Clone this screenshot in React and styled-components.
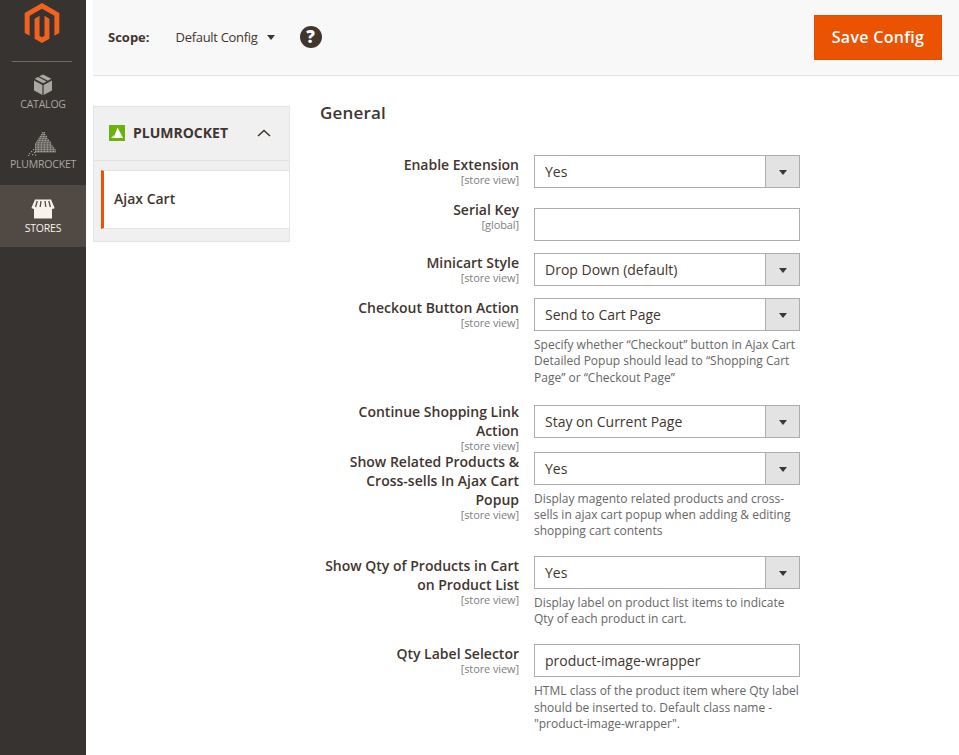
import React from 'react'
import styled, { createGlobalStyle } from 'styled-components'

const Global = createGlobalStyle`
  html, body { margin: 0; padding: 0; background: #fff; }
  body { font-family: "Open Sans", "Liberation Sans", sans-serif; color: #41362f; overflow: hidden; }
  * { box-sizing: border-box; }
`

const Page = styled.div`
  display: flex;
  min-height: 755px;
  width: 959px;
`

const Sidebar = styled.nav`
  width: 86px;
  flex: none;
  background: #373330;
  display: flex;
  flex-direction: column;
  align-items: stretch;
`

const LogoBox = styled.div`
  height: 62px;
  margin: 0 14px 0 12px;
  padding-top: 3px;
  border-bottom: 1px solid #736d68;
  display: flex;
  justify-content: center;
`

const NavItem = styled.a`
  display: flex;
  flex-direction: column;
  align-items: center;
  height: ${p => p.$h}px;
  padding-top: ${p => p.$top}px;
  background: ${p => (p.$active ? '#514943' : 'transparent')};
  color: ${p => (p.$active ? '#f7f3eb' : '#aaa6a0')};
  font-size: 10.5px;
  line-height: 14px;
  letter-spacing: -0.2px;
  white-space: nowrap;
`

const NavIcon = styled.svg`
  display: block;
  margin-bottom: ${p => p.$mb || 0}px;
`

const Main = styled.div`
  flex: 1;
  min-width: 0;
  padding-left: 7px;
`

const TopBar = styled.header`
  height: 76px;
  background: #f8f8f8;
  border-bottom: 1px solid #e3e3e3;
  display: flex;
  align-items: center;
  padding: 0 17px 0 15px;
`

const ScopeGroup = styled.div`
  display: flex;
  align-items: center;
  padding-bottom: 2px;
`

const ScopeLabel = styled.span`
  font-size: 13px;
  font-weight: 700;
  margin-right: 26px;
`

const ScopeValue = styled.span`
  font-size: 13px;
  letter-spacing: -0.3px;
  color: #41362f;
  margin-right: 9px;
`

const Caret = styled.span`
  display: block;
  width: 0;
  height: 0;
  border-left: 4px solid transparent;
  border-right: 4px solid transparent;
  border-top: 5px solid #41362f;
  margin-top: 2px;
`

const Help = styled.span`
  width: 22px;
  height: 22px;
  margin-left: 25px;
  border-radius: 50%;
  background: #41362f;
  color: #fff;
  font-size: 17px;
  font-weight: 800;
  line-height: 22px;
  text-align: center;
`

const SaveButton = styled.button`
  margin-left: auto;
  width: 128px;
  height: 45px;
  background: #eb5202;
  border: 1px solid #e04f02;
  color: #fff;
  font-family: inherit;
  font-size: 16px;
  font-weight: 600;
  letter-spacing: 0.3px;
  padding: 0 0 1px;
`

const Content = styled.div`
  display: flex;
  align-items: flex-start;
`

const Tabs = styled.aside`
  width: 197px;
  flex: none;
  margin-top: 30px;
  background: #f0f0f0;
  border: 1px solid #e3e3e3;
  border-right-color: #e6e6e6;
`

const TabsHead = styled.div`
  height: 54px;
  display: flex;
  align-items: center;
  padding: 0 18px 2px 15px;
  border-bottom: 1px solid #e3e3e3;
`

const TabsTitle = styled.span`
  font-size: 14px;
  font-weight: 700;
  margin-left: 8px;
  margin-right: auto;
`

const TabsItem = styled.div`
  margin: 9px 0 0 7px;
  height: 59px;
  background: #fff;
  border-left: 3px solid #eb5202;
  border-top: 1px solid #e3e3e3;
  border-bottom: 1px solid #e3e3e3;
  display: flex;
  align-items: center;
  padding: 0 0 2px 10px;
  font-size: 14px;
  font-weight: 600;
`

const TabsFoot = styled.div`
  height: 12px;
`

const Form = styled.section`
  width: 510px;
  margin-left: 30px;
  padding-top: 25px;
`

const Heading = styled.h2`
  margin: 0 0 30px;
  font-size: 17px;
  line-height: 24px;
  font-weight: 600;
  letter-spacing: 0.2px;
`

const Row = styled.div`
  display: grid;
  grid-template-columns: 199px 266px;
  column-gap: 15px;
  align-items: start;
  margin-bottom: ${p => p.$gap}px;
`

const LabelCol = styled.div`
  text-align: right;
  margin-top: ${p => (p.$lift ? -p.$lift : 0)}px;
`

const LabelText = styled.div`
  font-size: 14px;
  font-weight: 600;
  line-height: 19px;
  color: #41362f;
`

const Scope = styled.div`
  font-size: 11px;
  line-height: 12px;
  letter-spacing: -0.1px;
  color: #808080;
`

const SelectBox = styled.div`
  height: 33px;
  border: 1px solid #adadad;
  display: flex;
  align-items: center;
  font-size: 14px;
  padding-left: 10px;
  color: #41362f;
  background: #fff;
`

const SelectArrow = styled.span`
  margin-left: auto;
  width: 34px;
  height: 100%;
  background: #e3e3e3;
  border-left: 1px solid #adadad;
  display: flex;
  align-items: center;
  justify-content: center;
`

const TextInput = styled.input`
  display: block;
  width: 100%;
  height: 33px;
  border: 1px solid #adadad;
  padding: 0 10px;
  font-family: inherit;
  font-size: 14px;
  color: #41362f;
  background: #fff;
  outline: none;
`

const Note = styled.div`
  margin: 6px 0 0;
  font-size: 12px;
  line-height: 16.3px;
  color: #666;
  white-space: nowrap;
`

const Select = ({ value }) => (
  <SelectBox>
    {value}
    <SelectArrow><Caret /></SelectArrow>
  </SelectBox>
)

// pyramid of little dots, same as the menu icon
const pyramidDots = () => {
  const dots = []
  for (let r = 0; r < 11; r++) {
    const y = r * 1.9
    const right = 0.8 + r * 1.2
    const left = r > 6 ? 0.8 + 6 * 1.2 : right
    for (let x = 15 - left; x <= 15 + right; x += 1.5) {
      dots.push(<rect key={`${r}-${x}`} x={x} y={y} width="1.2" height="1.4" fill="#aaa6a0" />)
    }
  }
  const stray = [[5, 17], [3, 19], [6, 20], [1, 21], [4, 22], [7, 22.5], [0, 23]]
  stray.forEach(([x, y]) => dots.push(<rect key={`s${x}`} x={x} y={y} width="1.2" height="1.2" fill="#aaa6a0" />))
  return dots
}

const fields = [
  { label: ['Enable Extension'], scope: '[store view]', value: 'Yes', gap: 20 },
  { label: ['Serial Key'], scope: '[global]', input: '', lift: 8, gap: 12 },
  { label: ['Minicart Style'], scope: '[store view]', value: 'Drop Down (default)', gap: 12 },
  {
    label: ['Checkout Button Action'],
    scope: '[store view]',
    value: 'Send to Cart Page',
    note: ['Specify whether “Checkout” button in Ajax Cart', 'Detailed Popup should lead to “Shopping Cart', 'Page” or “Checkout Page”'],
    gap: 19,
  },
  { label: ['Continue Shopping Link', 'Action'], scope: '[store view]', value: 'Stay on Current Page', lift: 3, gap: 0 },
  {
    label: ['Show Related Products &', 'Cross-sells In Ajax Cart', 'Popup'],
    scope: '[store view]',
    value: 'Yes',
    note: ['Display magento related products and cross-', 'sells in ajax cart popup when adding & editing', 'shopping cart contents'],
    gap: 16,
  },
  {
    label: ['Show Qty of Products in Cart', 'on Product List'],
    scope: '[store view]',
    value: 'Yes',
    note: ['Display label on product list items to indicate', 'Qty of each product in cart.'],
    gap: 17,
  },
  {
    label: ['Qty Label Selector'],
    scope: '[store view]',
    input: 'product-image-wrapper',
    note: ['HTML class of the product item where Qty label', 'should be inserted to. Default class name -', '"product-image-wrapper".'],
    gap: 0,
  },
]

export default function App() {
  return (
    <Page>
      <Global />
      <Sidebar>
        <LogoBox>
          <svg width="40" height="40" viewBox="0 0 24 24">
            <path fill="#f1611f" d="M12 24l-4.455-2.572v-12l2.97-1.715v12.001l1.485.902 1.485-.902V7.713l2.97 1.715v12L12 24zM22.391 6v12l-2.969 1.714V7.713L12 3.43 4.574 7.713v12.001L1.609 18V6L12 0l10.391 6z" />
          </svg>
        </LogoBox>
        <NavItem $h={61} $top={12}>
          <NavIcon width="20" height="22" viewBox="0 0 20 22" $mb={1}>
            <path fill="#aaa6a0" d="M1 6.5l8.4 4.4V21L1 16.6zM19 6.5l-8.4 4.4V21l8.4-4.4z" />
            <path fill="#aaa6a0" d="M6.2 2.2L10 .4l8.4 4.4-3.6 1.9zM5 2.9l8.6 4.5L10 9.3 1.6 4.8z" />
          </NavIcon>
          CATALOG
        </NavItem>
        <NavItem $h={62} $top={9}>
          <NavIcon width="30" height="24" viewBox="0 0 30 24" $mb={1}>{pyramidDots()}</NavIcon>
          PLUMROCKET
        </NavItem>
        <NavItem $active $h={62} $top={14}>
          <NavIcon width="24" height="20" viewBox="0 0 24 20" $mb={2}>
            <path fill="#f7f3eb" d="M3 9h18v10.5H3z" />
            <path fill="#f7f3eb" d="M4 .5h16l3.5 8.2c-.5 1.6-3 1.6-3.9 0-.8 1.6-3 1.6-3.8 0-.8 1.6-3 1.6-3.8 0-.8 1.6-3 1.6-3.8 0-.8 1.6-3 1.6-3.8 0-.9 1.6-3.4 1.6-3.9 0z" />
            <path stroke="#514943" strokeWidth="1.3" fill="none" d="M6.2 2L4.6 8M10 2l-.8 6M14 2l.8 6M17.8 2l1.6 6" />
          </NavIcon>
          STORES
        </NavItem>
      </Sidebar>
      <Main>
        <TopBar>
          <ScopeGroup>
            <ScopeLabel>Scope:</ScopeLabel>
            <ScopeValue>Default Config</ScopeValue>
            <Caret />
            <Help>?</Help>
          </ScopeGroup>
          <SaveButton>Save Config</SaveButton>
        </TopBar>
        <Content>
          <Tabs>
            <TabsHead>
              <svg width="16" height="16" viewBox="0 0 16 16">
                <rect width="16" height="16" fill="#6cb10f" />
                <path fill="#fff" d="M8.6 2.5L14 13H4.5z" />
                <path fill="#dff0c4" d="M2 13l3-3 1 3z" />
              </svg>
              <TabsTitle>PLUMROCKET</TabsTitle>
              <svg width="14" height="8" viewBox="0 0 14 8">
                <path d="M1 7l6-5.5L13 7" fill="none" stroke="#41362f" strokeWidth="1.6" />
              </svg>
            </TabsHead>
            <TabsItem>Ajax Cart</TabsItem>
            <TabsFoot />
          </Tabs>
          <Form>
            <Heading>General</Heading>
            {fields.map(f => (
              <Row key={f.label[0]} $gap={f.gap}>
                <LabelCol $lift={f.lift}>
                  <LabelText>
                    {f.label.map(line => <div key={line}>{line}</div>)}
                  </LabelText>
                  <Scope>{f.scope}</Scope>
                </LabelCol>
                <div>
                  {f.input !== undefined
                    ? <TextInput defaultValue={f.input} />
                    : <Select value={f.value} />}
                  {f.note && <Note>{f.note.map(line => <div key={line}>{line}</div>)}</Note>}
                </div>
              </Row>
            ))}
          </Form>
        </Content>
      </Main>
    </Page>
  )
}
